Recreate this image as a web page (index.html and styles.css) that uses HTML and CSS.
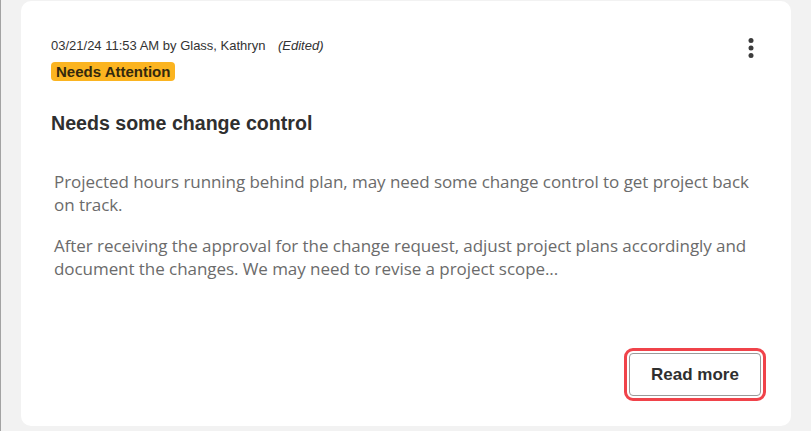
FILE: index.html
```html
<!DOCTYPE html>
<html lang="en">
<head>
<meta charset="utf-8">
<title>Note card</title>
<link rel="stylesheet" href="styles.css">
</head>
<body>
<div class="page">
  <article class="card">
    <header class="card-head">
      <div class="head-info">
        <div class="meta">03/21/24 11:53 AM by Glass, Kathryn <span class="edited">(Edited)</span></div>
        <span class="badge">Needs Attention</span>
      </div>
      <button class="kebab" aria-label="More actions">
        <svg width="8" height="22" viewBox="0 0 8 22" aria-hidden="true">
          <circle cx="4" cy="3.5" r="2.5"/>
          <circle cx="4" cy="11" r="2.5"/>
          <circle cx="4" cy="18.5" r="2.5"/>
        </svg>
      </button>
    </header>
    <h2 class="title">Needs some change control</h2>
    <div class="body">
      <p>Projected hours running behind plan, may need some change control to get project back on track.</p>
      <p>After receiving the approval for the change request, adjust project plans accordingly and document the changes. We may need to revise a project scope...</p>
    </div>
    <footer class="card-foot">
      <button class="read-more">Read more</button>
    </footer>
  </article>
</div>
</body>
</html>
```

FILE: styles.css
```css
html, body {
  margin: 0;
  padding: 0;
  height: 100%;
}
body {
  background: #f2f2f2;
  font-family: "Liberation Sans", Arial, sans-serif;
  color: #333333;
}
.page {
  height: 100%;
  box-sizing: border-box;
  border-left: 1px solid #a3a3a3;
  padding: 1px 20px 5px 20px;
}
.card {
  box-sizing: border-box;
  width: 770px;
  height: 425px;
  background: #ffffff;
  border-radius: 10px;
  padding: 37px 30px 30px 30px;
  display: flex;
  flex-direction: column;
}
.card-head {
  display: flex;
  justify-content: space-between;
  align-items: flex-start;
}
.head-info {
  display: flex;
  flex-direction: column;
  align-items: flex-start;
}
.meta {
  font-size: 13px;
  line-height: 16px;
  color: #333333;
}
.edited {
  font-style: italic;
  margin-left: 9px;
}
.badge {
  margin-top: 8px;
  background: #fbb420;
  color: #33290e;
  font-weight: bold;
  font-size: 15px;
  line-height: 19px;
  padding: 0 5px;
  border-radius: 4px;
}
.kebab {
  border: 0;
  background: transparent;
  padding: 0;
  width: 21px;
  height: 24px;
  margin-top: -2px;
  display: flex;
  align-items: center;
  justify-content: center;
}
.kebab svg {
  fill: #3c3c3c;
}
.title {
  margin: 30px 0 0 0;
  font-size: 19.6px;
  line-height: 24px;
  font-weight: bold;
  color: #2f2f2f;
}
.body {
  margin-top: 35px;
  padding-left: 3px;
  font-family: "Open Sans", sans-serif;
  font-size: 17px;
  line-height: 23px;
  letter-spacing: -0.06px;
  color: #6b6b6b;
}
.body p {
  margin: 0 0 18px 0;
}
.card-foot {
  margin-top: auto;
  display: flex;
  justify-content: flex-end;
}
.read-more {
  width: 132px;
  height: 43px;
  background: #ffffff;
  border: 1px solid #9a9a9a;
  border-radius: 4px;
  font-family: "Liberation Sans", Arial, sans-serif;
  font-weight: bold;
  font-size: 17px;
  color: #2f2f2f;
  outline: 3px solid #f0434a;
  outline-offset: 2px;
}
```
